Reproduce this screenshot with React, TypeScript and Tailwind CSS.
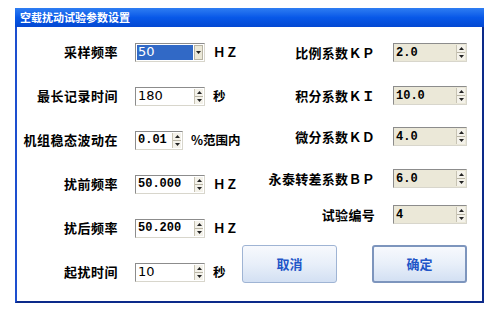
import React from "react";

const cjk = "font-['Noto_Sans_CJK_SC',sans-serif]";

function Spin() {
  return (
    <div className="w-[9px] h-full flex flex-col border-l border-[#c8c4b4] bg-[#f4f2ea]">
      <div className="flex-1 flex items-center justify-center border-b border-[#b8b4a4]">
        <svg width="5" height="3" viewBox="0 0 5 3"><path d="M2.5 0L5 3H0z" fill="#222" /></svg>
      </div>
      <div className="flex-1 flex items-center justify-center">
        <svg width="5" height="3" viewBox="0 0 5 3"><path d="M0 0h5L2.5 3z" fill="#222" /></svg>
      </div>
    </div>
  );
}

function Field({ value, w, beige, mono = true }: { value: string; w: string; beige?: boolean; mono?: boolean }) {
  return (
    <div
      className={`${w} h-[19px] flex border border-[#8c8c8c] border-b-[#d8d6cc] border-r-[#d8d6cc] ${beige ? "bg-[#ebe8d8]" : "bg-white"}`}
    >
      <div
        className={`flex-1 pl-[2px] flex items-center text-[12px] font-bold text-black ${mono ? "font-['Liberation_Mono',monospace]" : "font-['DejaVu_Sans',sans-serif] font-normal text-[13px]"}`}
      >
        {value}
      </div>
      <div className="py-[1px] pr-[1px]">
        <Spin />
      </div>
    </div>
  );
}

function Combo() {
  return (
    <div className="w-[70px] h-[19px] flex border border-[#8c8c8c] border-b-[#d8d6cc] border-r-[#d8d6cc] bg-white p-[1px]">
      <div className="flex-1 bg-[#3169c6] text-white text-[13px] pl-[1px] flex items-center font-['DejaVu_Sans',sans-serif]">50</div>
      <div className="w-[9px] ml-[1px] bg-[#ebe8d8] border border-[#b8b4a4] flex items-center justify-center">
        <svg width="5" height="3" viewBox="0 0 5 3"><path d="M0 0h5L2.5 3z" fill="#222" /></svg>
      </div>
    </div>
  );
}

function LeftRow({ label, children, unit }: { label: string; children: React.ReactNode; unit: string }) {
  return (
    <div className="h-[44px] flex items-center">
      <div className="w-[101px] text-right text-[13px] font-bold tracking-[0.5px] text-black">{label}</div>
      <div className="ml-[17px]">{children}</div>
      <div className="ml-[8px] text-[12.5px] font-bold text-black">{unit}</div>
    </div>
  );
}

function RightRow({ label, value, mt }: { label: string; value: string; mt: string }) {
  return (
    <div className={`${mt} h-[19px] flex items-center`}>
      <div className="w-[133px] text-right text-[13px] font-bold tracking-[0.3px] text-black">{label}</div>
      <div className="ml-[18px]">
        <Field value={value} w="w-[74px]" beige />
      </div>
    </div>
  );
}

export default function App() {
  return (
    <div className={`w-[492px] h-[312px] bg-white pt-[8px] pl-[15px] ${cjk}`}>
      <div className="w-[469px] h-[295px] flex flex-col border-l-2 border-r-2 border-b-2 border-l-[#1d4fcf] border-r-[#0c2a8a] border-b-[#0c2a8a]">
        <div className="h-[19px] -mx-[2px] bg-gradient-to-b from-[#2e7df2] via-[#0858e8] to-[#0448d2] flex items-center pl-[5px] text-white text-[11px] font-bold">
          空载扰动试验参数设置
        </div>
        <div className="flex-1 flex">
          <div className="w-[225px] pt-[3px] flex flex-col">
            <LeftRow label="采样频率" unit="ＨＺ">
              <Combo />
            </LeftRow>
            <LeftRow label="最长记录时间" unit="秒">
              <Field value="180" w="w-[70px]" mono={false} />
            </LeftRow>
            <LeftRow label="机组稳态波动在" unit="%范围内">
              <Field value="0.01" w="w-[48px]" />
            </LeftRow>
            <LeftRow label="扰前频率" unit="ＨＺ">
              <Field value="50.000" w="w-[70px]" />
            </LeftRow>
            <LeftRow label="扰后频率" unit="ＨＺ">
              <Field value="50.200" w="w-[70px]" />
            </LeftRow>
            <LeftRow label="起扰时间" unit="秒">
              <Field value="10" w="w-[70px]" mono={false} />
            </LeftRow>
          </div>
          <div className="flex flex-col">
            <RightRow label="比例系数ＫＰ" value="2.0" mt="mt-[16px]" />
            <RightRow label="积分系数ＫＩ" value="10.0" mt="mt-[24px]" />
            <RightRow label="微分系数ＫＤ" value="4.0" mt="mt-[22px]" />
            <RightRow label="永泰转差系数ＢＰ" value="6.0" mt="mt-[23px]" />
            <RightRow label="试验编号" value="4" mt="mt-[17px]" />
            <div className="mt-[21px] flex">
              <button className="w-[95px] h-[38px] rounded-[3px] border border-[#9fb4d4] bg-gradient-to-b from-[#f7f9fd] via-[#e8eff9] to-[#d3e0f3] text-[13px] font-bold text-[#1f56c8]">
                取消
              </button>
              <button className="ml-[35px] w-[95px] h-[38px] rounded-[3px] border-2 border-[#7d95bd] bg-gradient-to-b from-[#f7f9fd] via-[#e8eff9] to-[#d3e0f3] text-[13px] font-bold text-[#1f56c8]">
                确定
              </button>
            </div>
          </div>
        </div>
      </div>
    </div>
  );
}
